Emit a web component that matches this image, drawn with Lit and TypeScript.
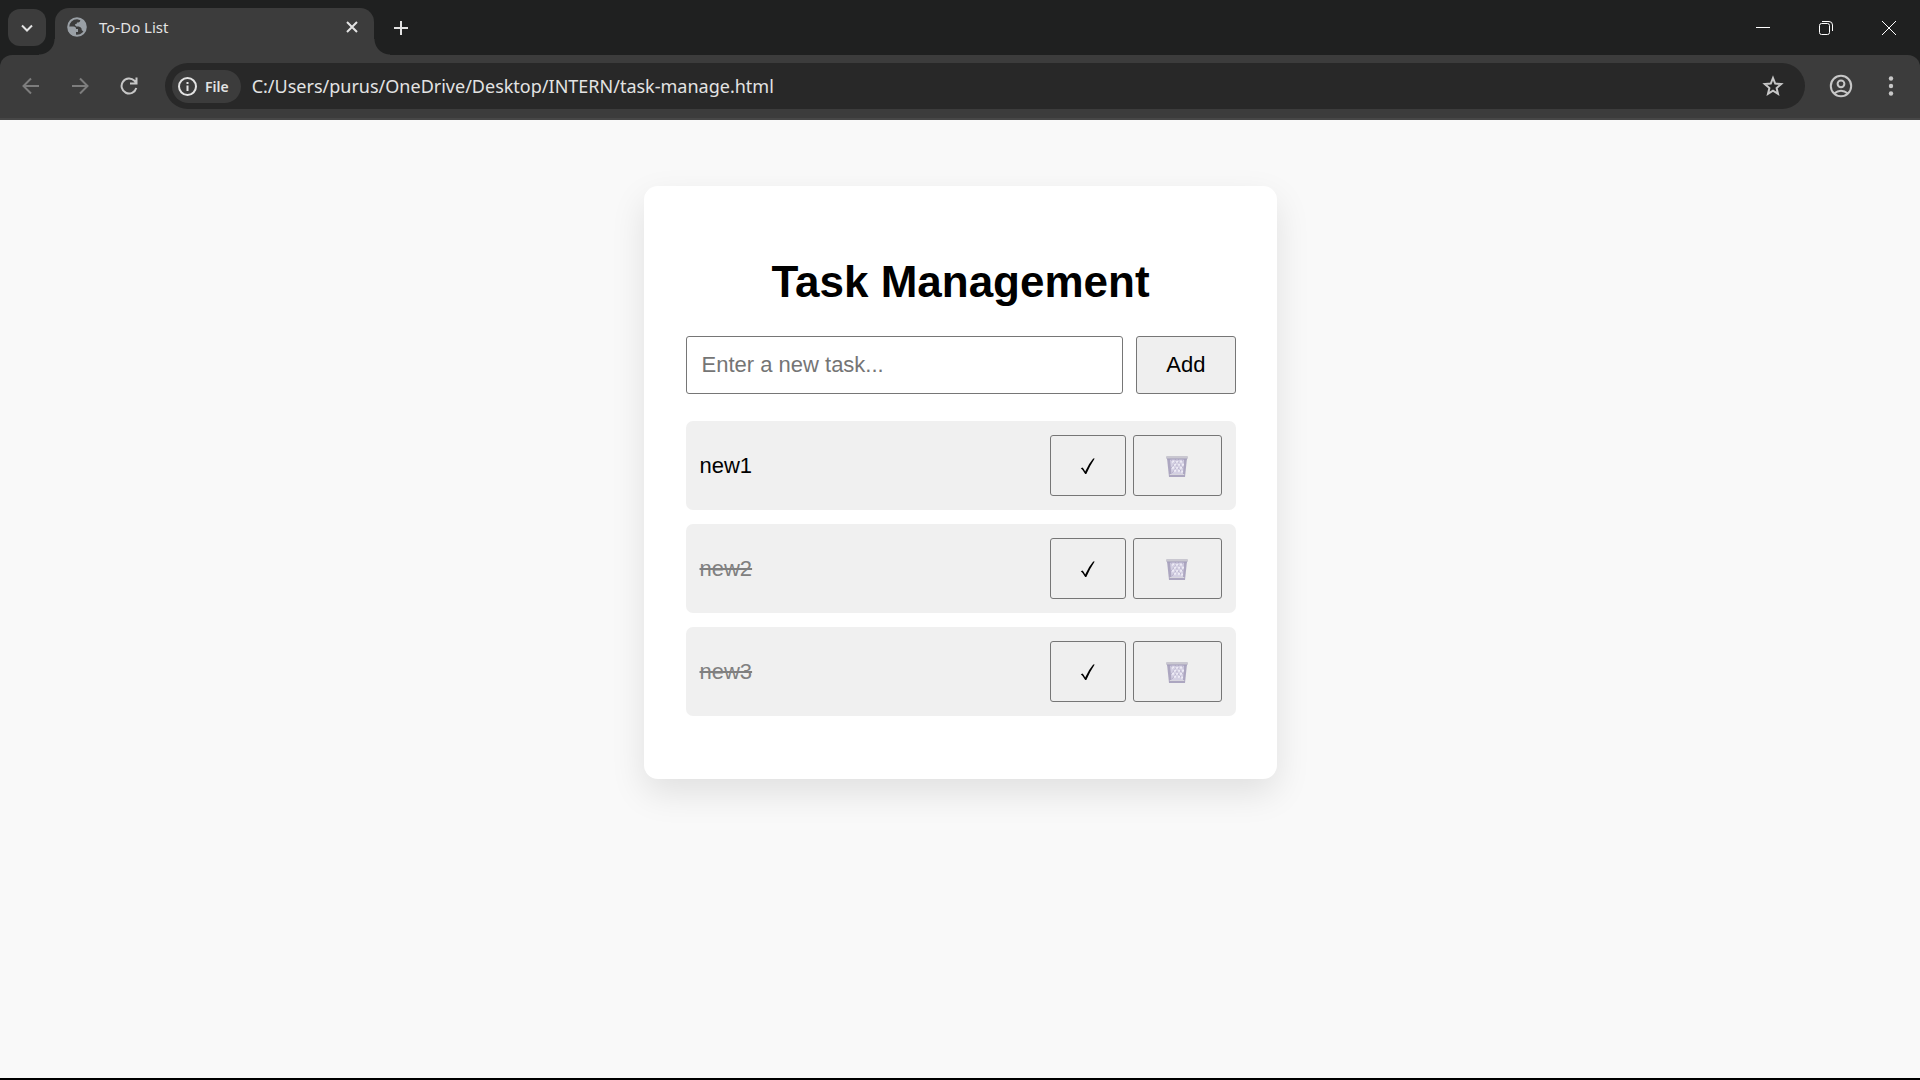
import { LitElement, html, css, svg } from "lit";
import { customElement, property, state } from "lit/decorators.js";
import { classMap } from "lit/directives/class-map.js";

interface Task {
  name: string;
  done: boolean;
}

@customElement("browser-chrome")
class BrowserChrome extends LitElement {
  static styles = css`
    :host {
      display: block;
      background: #1f2020;
      color: #e3e3e3;
      font-family: "Noto Sans", "Open Sans", sans-serif;
    }
    button {
      display: grid;
      place-items: center;
      margin: 0;
      padding: 0;
      border: 0;
      background: none;
      color: inherit;
      font: inherit;
    }
    svg {
      display: block;
      fill: none;
      stroke: currentColor;
      stroke-width: 2;
    }
    .tabs {
      display: flex;
      height: 55px;
    }
    .search-tabs {
      width: 38px;
      height: 37px;
      margin: 9px 9px 0 8px;
      border-radius: 12px;
      background: #3c3c3c;
    }
    .tab {
      position: relative;
      display: flex;
      align-items: center;
      box-sizing: border-box;
      width: 319px;
      height: 47px;
      margin-top: 8px;
      padding: 0 12px 9px;
      border-radius: 14px 14px 0 0;
      background: #3c3c3c;
    }
    .tab::before,
    .tab::after {
      content: "";
      position: absolute;
      bottom: 0;
      width: 16px;
      height: 16px;
    }
    .tab::before {
      right: 100%;
      background: radial-gradient(circle at 0 0, transparent 15px, #3c3c3c 16px);
    }
    .tab::after {
      left: 100%;
      background: radial-gradient(circle at 100% 0, transparent 15px, #3c3c3c 16px);
    }
    .title {
      flex: 1;
      margin-left: 12px;
      font-size: 15px;
      line-height: 20px;
    }
    .close-tab {
      width: 20px;
      height: 20px;
    }
    .new-tab {
      width: 28px;
      height: 28px;
      margin: 14px 0 0 13px;
    }
    .window {
      display: flex;
      margin-left: auto;
    }
    .window button {
      width: 63px;
    }
    .window svg {
      stroke-width: 1;
      stroke: #fff;
    }
    .toolbar {
      display: flex;
      align-items: center;
      height: 62px;
      padding: 0 14px 1px 16px;
      border-bottom: 2px solid #474747;
      border-radius: 12px 12px 0 0;
      background: #3c3c3c;
      color: #c7c7c7;
    }
    .nav {
      display: flex;
      gap: 19px;
    }
    .nav button {
      width: 30px;
      height: 30px;
    }
    .nav button:disabled {
      color: #7d7d7d;
    }
    .address {
      flex: 1;
      display: flex;
      align-items: center;
      height: 46px;
      margin: 0 21px;
      padding: 0 21px 0 7px;
      border-radius: 23px;
      background: #282828;
      box-sizing: border-box;
    }
    .scheme {
      display: flex;
      align-items: center;
      gap: 8px;
      height: 33px;
      padding: 0 12px 0 6px;
      border-radius: 17px;
      background: #3c3c3c;
      color: #e3e3e3;
      font-size: 14px;
      font-weight: 600;
    }
    .url {
      flex: 1;
      min-width: 0;
      margin: 0 11px;
      padding: 0;
      border: 0;
      outline: 0;
      background: none;
      color: #e3e3e3;
      font: 18px/24px "Noto Sans", "Open Sans", sans-serif;
    }
    .tools {
      display: flex;
      gap: 20px;
    }
    .tools button {
      width: 30px;
      height: 30px;
    }
  `;

  render() {
    return html`
      <div class="tabs">
        <button class="search-tabs" aria-label="Search tabs">
          <svg width="14" height="14" viewBox="0 0 14 14"><path d="M2 4.5l5 5 5-5" /></svg>
        </button>
        <div class="tab">
          <svg width="20" height="20" viewBox="0 0 20 20">
            <circle cx="10" cy="10" r="8.8" stroke="#9aa0a6" stroke-width="2" />
            <path
              fill="#9aa0a6"
              stroke="none"
              d="M1 9.500h5.500c2 0 2.500 1 2.500 2.500h2v3H9v4C4 19 .5 15 1 9.500zM11 1c4.500.5 8 4.500 8 9 0 1.500-.5 3-1.200 4.200-2.300.3-3.300-.7-3.300-2.700-1-1.500-2-2-4-2-1.500 0-2.500-.8-2.500-2.300 1.500 0 2-.7 2-1.700 2 0 3.300-.5 3.300-2.500C11.800 3 11 2.300 11 1z"
            />
          </svg>
          <span class="title">To-Do List</span>
          <button class="close-tab" aria-label="Close tab">
            <svg width="14" height="14" viewBox="0 0 14 14"><path d="M2 2l10 10M12 2L2 12" /></svg>
          </button>
        </div>
        <button class="new-tab" aria-label="New tab">
          <svg width="16" height="16" viewBox="0 0 16 16"><path d="M8 1v14M1 8h14" /></svg>
        </button>
        <div class="window">
          <button aria-label="Minimize">
            <svg width="14" height="14" viewBox="0 0 14 14"><path d="M0 6.500h14" /></svg>
          </button>
          <button aria-label="Restore">
            <svg width="16" height="16" viewBox="0 0 16 16">
              <rect x="1.500" y="3.500" width="10" height="11" rx="2" />
              <path d="M4 1.500h7q3.500 0 3.500 3.500v6" />
            </svg>
          </button>
          <button aria-label="Close window">
            <svg width="16" height="16" viewBox="0 0 16 16"><path d="M1 1l14 14M15 1L1 15" /></svg>
          </button>
        </div>
      </div>
      <div class="toolbar">
        <div class="nav">
          <button disabled aria-label="Back">
            <svg width="18" height="18" viewBox="0 0 18 18"><path d="M17 9H2M9 1.500L1.500 9 9 16.500" /></svg>
          </button>
          <button disabled aria-label="Forward">
            <svg width="18" height="18" viewBox="0 0 18 18"><path d="M1 9h15M9 1.500L16.500 9 9 16.500" /></svg>
          </button>
          <button aria-label="Reload">
            <svg width="18" height="18" viewBox="0 0 18 18">
              <path d="M16.300 11A7.500 7.500 0 1 1 14.500 3.800L16.500 6M10 6.500h6.500V.5" />
            </svg>
          </button>
        </div>
        <div class="address">
          <button class="scheme" aria-label="File, view site information">
            <svg width="19" height="19" viewBox="0 0 19 19">
              <circle cx="9.500" cy="9.500" r="8.500" />
              <path d="M9.500 8.500v5.500M9.500 5v2" />
            </svg>
            File
          </button>
          <input
            class="url"
            aria-label="Address"
            .value=${"C:/Users/purus/OneDrive/Desktop/INTERN/task-manage.html"}
          />
          <button aria-label="Bookmark this page">
            <svg width="22" height="22" viewBox="0 0 22 22">
              <path d="M11 3l2.200 5.600 6 .5-4.600 3.900 1.400 5.900-5-3.200-5 3.200 1.400-5.900-4.600-3.900 6-.5z" />
            </svg>
          </button>
        </div>
        <div class="tools">
          <button aria-label="Profile">
            <svg width="24" height="24" viewBox="0 0 24 24">
              <circle cx="12" cy="12" r="10.200" />
              <circle cx="12" cy="9.800" r="3.400" />
              <path d="M5 19.500q7-5.500 14 0" />
            </svg>
          </button>
          <button aria-label="Menu">
            <svg width="6" height="22" viewBox="0 0 6 22">
              <g fill="currentColor" stroke="none">
                <circle cx="3" cy="3.500" r="2.200" />
                <circle cx="3" cy="11" r="2.200" />
                <circle cx="3" cy="18.500" r="2.200" />
              </g>
            </svg>
          </button>
        </div>
      </div>
    `;
  }
}

@customElement("task-item")
class TaskItem extends LitElement {
  @property({ attribute: false }) task: Task = { name: "", done: false };

  static styles = css`
    :host {
      display: flex;
      align-items: center;
      gap: 7px;
      padding: 14px;
      border-radius: 7px;
      background: #f0f0f0;
      font-size: 22px;
      line-height: 26px;
    }
    .name {
      flex: 1;
    }
    .done {
      color: gray;
      text-decoration: line-through;
    }
    button {
      display: grid;
      place-items: center;
      box-sizing: border-box;
      height: 61px;
      margin: 0;
      padding: 0 28px;
      border: 1px solid #767676;
      border-radius: 3px;
      background: #efefef;
      color: #000;
    }
    svg {
      display: block;
    }
  `;

  private toggle() {
    this.dispatchEvent(new CustomEvent("toggle-task"));
  }

  private remove() {
    this.dispatchEvent(new CustomEvent("remove-task"));
  }

  render() {
    const holes = [
      [7, 7], [11, 7], [15, 7], [9, 10], [13, 10], [17, 10],
      [7, 13], [11, 13], [15, 13], [9, 16], [13, 16], [16, 17],
    ];
    return html`
      <span class=${classMap({ name: true, done: this.task.done })}>${this.task.name}</span>
      <button aria-label="Complete ${this.task.name}" @click=${this.toggle}>
        <svg width="18" height="20" viewBox="0 0 18 20">
          <path
            d="M1.800 12.300l1.700-.9q1.200 1.200 2.700 4Q9.500 8 14.200 2.500h1.500Q11 9.500 7.300 18H6.200Q4 13.800 1.800 12.300z"
            fill="#000"
          />
        </svg>
      </button>
      <button aria-label="Delete ${this.task.name}" @click=${this.remove}>
        <svg width="31" height="24" viewBox="-4 0 31 24">
          <path d="M1 4h20l-2 19H3z" fill="#aca6c0" />
          <path d="M4 5h14l-1 15H5.500z" fill="#d3cfe2" />
          <path d="M4.500 5l12 14M9 5l9 10M17.500 5L6 19M13 5L5 14" fill="none" stroke="#b9b3cd" />
          ${holes.map(([x, y]) => svg`<path d="M${x} ${y - 1}l1 1.500-1 2-1-1.500z" fill="#f5f3fb" />`)}
          <path d="M4 20h14l.5 1h-15z" fill="#d8d6de" />
          <rect x="0" y="2" width="22" height="3" rx="1" fill="#c9c7d0" />
          <path d="M1 4.500h20v1H1z" fill="#a39dba" />
        </svg>
      </button>
    `;
  }
}

@customElement("app-root")
class AppRoot extends LitElement {
  @state() private tasks: Task[] = [
    { name: "new1", done: false },
    { name: "new2", done: true },
    { name: "new3", done: true },
  ];

  static styles = css`
    :host {
      display: flex;
      flex-direction: column;
      box-sizing: border-box;
      min-height: 100vh;
      border-bottom: 2px solid #000;
      background: #f9f9f9;
      color: #000;
      font-family: "Liberation Sans", Arial, sans-serif;
    }
    main {
      padding: 66px 0;
    }
    .card {
      box-sizing: border-box;
      max-width: 633px;
      margin: 0 auto;
      padding: 70px 41px 63px 42px;
      border-radius: 14px;
      background: #fff;
      box-shadow: 0 14px 35px rgba(0, 0, 0, 0.1);
    }
    h1 {
      margin: 0 0 28px;
      font-size: 44px;
      line-height: 52px;
      text-align: center;
    }
    form {
      display: flex;
      gap: 13px;
      margin-bottom: 27px;
    }
    .new-task,
    .add {
      box-sizing: border-box;
      height: 58px;
      margin: 0;
      border: 1px solid #767676;
      border-radius: 3px;
      font: 22px/26px "Liberation Sans", Arial, sans-serif;
    }
    .new-task {
      flex: 1;
      min-width: 0;
      padding: 0 15px;
      background: #fff;
      color: #000;
    }
    .new-task::placeholder {
      color: #757575;
    }
    .add {
      padding: 0 29px;
      background: #efefef;
      color: #000;
    }
    .tasks {
      display: grid;
      gap: 14px;
      margin: 0;
      padding: 0;
      list-style: none;
    }
  `;

  private addTask(event: SubmitEvent) {
    event.preventDefault();
    const form = event.target as HTMLFormElement;
    const name = String(new FormData(form).get("task") ?? "").trim();
    if (!name) return;
    this.tasks = [...this.tasks, { name, done: false }];
    form.reset();
  }

  private toggleTask(task: Task) {
    this.tasks = this.tasks.map((t) => (t === task ? { ...t, done: !t.done } : t));
  }

  private removeTask(task: Task) {
    this.tasks = this.tasks.filter((t) => t !== task);
  }

  render() {
    return html`
      <browser-chrome></browser-chrome>
      <main>
        <section class="card">
          <h1>Task Management</h1>
          <form @submit=${this.addTask}>
            <input class="new-task" name="task" aria-label="New task" placeholder="Enter a new task..." />
            <button class="add">Add</button>
          </form>
          <ul class="tasks">
            ${this.tasks.map(
              (task) => html`
                <li>
                  <task-item
                    .task=${task}
                    @toggle-task=${() => this.toggleTask(task)}
                    @remove-task=${() => this.removeTask(task)}
                  ></task-item>
                </li>
              `
            )}
          </ul>
        </section>
      </main>
    `;
  }
}
